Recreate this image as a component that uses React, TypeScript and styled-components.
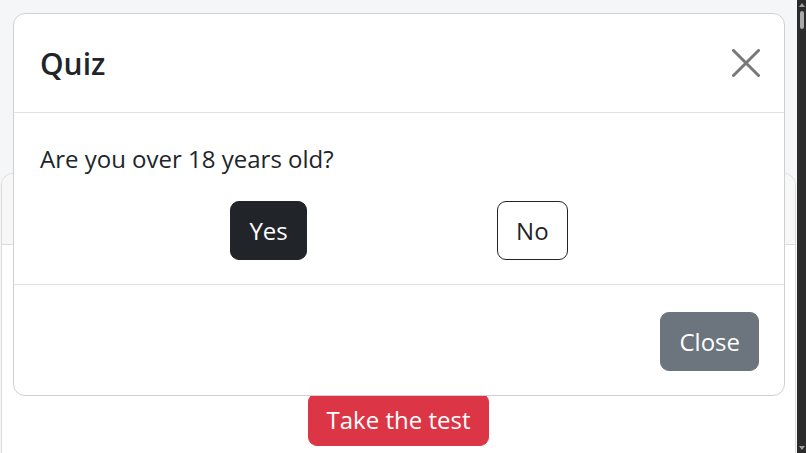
import styled, { createGlobalStyle } from 'styled-components';

const GlobalStyle = createGlobalStyle`
  html, body {
    margin: 0;
    height: 100%;
    overflow: hidden;
  }

  body {
    font-family: "Open Sans", "Noto Sans", sans-serif;
    color: #212529;
    background: #f5f6f8;
  }
`;

const App = () => {
  return (
    <>
      <GlobalStyle />
      <Shell>
        <Page>
          <Card>
            <CardHeader />
            <CardBody>
              <Button $variant="danger" $height={53}>Take the test</Button>
            </CardBody>
          </Card>

          <Overlay>
            <Dialog>
              <ModalHeader>
                <ModalTitle>Quiz</ModalTitle>
                <CloseIcon aria-label="Close">
                  <svg width="28" height="28" viewBox="0 0 28 28">
                    <path d="M1.5 1.5 L26.5 26.5 M26.5 1.5 L1.5 26.5" stroke="#787878" strokeWidth="3" strokeLinecap="round" />
                  </svg>
                </CloseIcon>
              </ModalHeader>

              <ModalBody>
                <Question>Are you over 18 years old?</Question>
                <Answers>
                  <Button $variant="dark">Yes</Button>
                  <Button $variant="outline">No</Button>
                </Answers>
              </ModalBody>

              <ModalFooter>
                <Button $variant="secondary">Close</Button>
              </ModalFooter>
            </Dialog>
          </Overlay>
        </Page>

        <Scrollbar>
          <Arrow $dir="up" />
          <Thumb />
          <Track />
          <Arrow $dir="down" />
        </Scrollbar>
      </Shell>
    </>
  );
}

const Shell = styled.div`
  display: flex;
  width: 806px;
  height: 453px;
`;

const Page = styled.div`
  flex: 1;
  min-width: 0;
  position: relative;
  overflow: hidden;
  background: #f5f6f8;
`;

const Card = styled.div`
  margin: 173px 1px 0;
  height: 400px;
  background: #fff;
  border: 1px solid #d9dadc;
  border-radius: 12px 12px 0 0;
  overflow: hidden;
`;

const CardHeader = styled.div`
  height: 70px;
  background: #f7f7f8;
  border-bottom: 1px solid #dadbdd;
`;

const CardBody = styled.div`
  display: flex;
  justify-content: center;
  padding-top: 148px;
`;

const Overlay = styled.div`
  position: absolute;
  inset: 0;
  padding: 13px 12px 0 13px;
`;

const Dialog = styled.div`
  display: flex;
  flex-direction: column;
  height: 383px;
  box-sizing: border-box;
  background: #fff;
  border: 1px solid #cfd0d2;
  border-radius: 12px;
  overflow: hidden;
`;

const ModalHeader = styled.div`
  height: 98px;
  display: flex;
  align-items: center;
  justify-content: space-between;
  padding: 0 24px 0 26px;
  border-bottom: 1px solid #dee2e6;
`;

const ModalTitle = styled.h5`
  margin: 0;
  font-size: 30px;
  font-weight: 600;
  line-height: 45px;
  color: #212529;
`;

const CloseIcon = styled.button`
  display: flex;
  padding: 0;
  border: none;
  background: none;
  cursor: pointer;
`;

const ModalBody = styled.div`
  padding: 24px 26px;
  border-bottom: 1px solid #dee2e6;
`;

const Question = styled.p`
  margin: 0 0 20px;
  font-size: 24px;
  line-height: 44px;
`;

const Answers = styled.div`
  display: flex;
  justify-content: space-evenly;
`;

const ModalFooter = styled.div`
  flex: 1;
  display: flex;
  justify-content: flex-end;
  align-items: flex-start;
  padding: 27px 25px 0;
`;

const variants = {
  dark: { bg: '#212529', color: '#fff', border: '#212529' },
  outline: { bg: '#fff', color: '#212529', border: '#212529' },
  secondary: { bg: '#6c757d', color: '#fff', border: '#6c757d' },
  danger: { bg: '#dc3545', color: '#fff', border: '#dc3545' },
};

const Button = styled.button<{ $variant: keyof typeof variants; $height?: number }>`
  height: ${({ $height }) => $height ?? 59}px;
  padding: 0 18px;
  font-family: inherit;
  font-size: 24px;
  background: ${({ $variant }) => variants[$variant].bg};
  color: ${({ $variant }) => variants[$variant].color};
  border: 1px solid ${({ $variant }) => variants[$variant].border};
  border-radius: 9px;
  cursor: pointer;
`;

const Scrollbar = styled.div`
  flex: 0 0 9px;
  background-color: #2b2b2b;
  display: flex;
  flex-direction: column;
  align-items: center;
`;

const Arrow = styled.div<{ $dir: 'up' | 'down' }>`
  width: 0;
  height: 0;
  margin: 3px 0;
  border-left: 3px solid transparent;
  border-right: 3px solid transparent;
  ${({ $dir }) => ($dir === 'up' ? 'border-bottom: 4px solid #a0a0a0;' : 'border-top: 4px solid #a0a0a0;')}
`;

const Thumb = styled.div`
  width: 4px;
  height: 18px;
  margin-top: 1px;
  border-radius: 2px;
  background: #a9a9a9;
`;

const Track = styled.div`
  flex: 1;
`;

export default App;
